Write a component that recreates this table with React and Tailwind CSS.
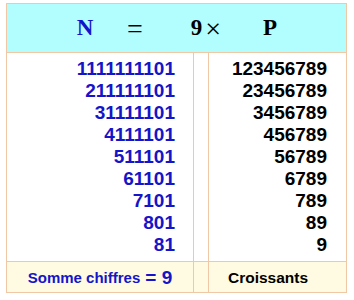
import React from "react";

const rows = [
  ["1111111101", "123456789"],
  ["211111101", "23456789"],
  ["31111101", "3456789"],
  ["4111101", "456789"],
  ["511101", "56789"],
  ["61101", "6789"],
  ["7101", "789"],
  ["801", "89"],
  ["81", "9"],
];

const App = () => {
  return (
    <div className="w-[354px] h-[300px] bg-white pt-[3px] pl-[6px]">
      <div className="w-[341px] border border-[#f0c8a6] font-['Liberation_Sans',Arial,sans-serif]">
        {/* Header */}
        <div className="h-[49px] bg-[#b2fdfd] border-b border-[#f0c8a6] flex items-baseline pt-[8px] font-['Liberation_Serif','Times_New_Roman',serif] font-bold text-[23px] leading-none text-black">
          <span className="ml-[53px] w-[50px] text-center text-[#1414c8]">N</span>
          <span className="w-[50px] text-center font-normal text-[28px] translate-y-[3px]">=</span>
          <span className="ml-[21px] w-[50px] text-center">
            <span>9</span>
            <span className="inline-block font-normal text-[28px] ml-[3px] translate-y-[3px]">×</span>
          </span>
          <span className="ml-[14px] w-[50px] text-center">P</span>
        </div>

        {/* Body */}
        <div className="grid grid-cols-[187px_14px_138px] font-bold text-[19px] leading-[22px]">
          <div className="border-r border-[#f0c8a6] py-[5px] pr-[18px] text-right text-[#1414c8]">
            {rows.map(([n]) => (
              <div key={n}>{n}</div>
            ))}
          </div>
          <div></div>
          <div className="border-l border-[#f0c8a6] py-[5px] pr-[19px] text-right text-black">
            {rows.map(([, p]) => (
              <div key={p}>{p}</div>
            ))}
          </div>
        </div>

        {/* Footer */}
        <div className="grid grid-cols-[187px_14px_138px] h-[31px] bg-[#fffbe2] border-t border-[#f0c8a6] font-bold">
          <div className="border-r border-[#f0c8a6] flex items-center justify-center text-[#1414c8] pt-[2px]">
            <span className="text-[15px]">Somme chiffres</span>
            <span className="text-[19px] ml-[5px]">= 9</span>
          </div>
          <div></div>
          <div className="border-l border-[#f0c8a6] flex items-center pl-[19px] text-[15.5px] text-black">
            Croissants
          </div>
        </div>
      </div>
    </div>
  );
};

export default App;
